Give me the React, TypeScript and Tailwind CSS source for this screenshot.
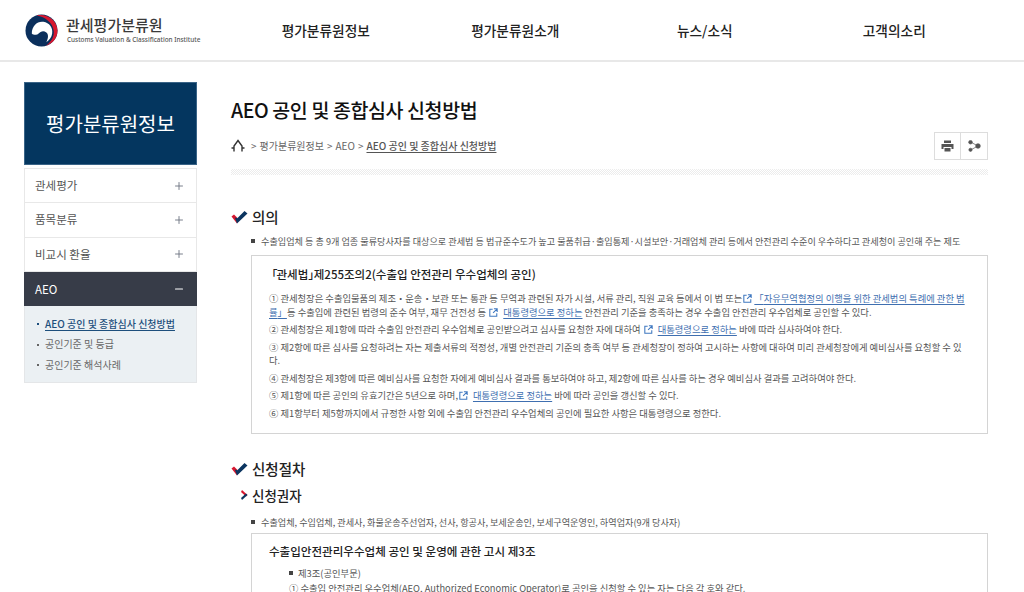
import { Plus, Minus } from "lucide-react";

const FONT = "font-['Noto_Sans_CJK_KR','Noto_Sans',sans-serif]";

const navItems = ["평가분류원정보", "평가분류원소개", "뉴스/소식", "고객의소리"];
const sideItems = ["관세평가", "품목분류", "비교시 환율"];

function Logo() {
  return (
    <svg width="33" height="33" viewBox="0 0 34 34" className="shrink-0">
      <circle cx="17" cy="17" r="16.500" fill="#0b2f5c" />
      <path d="M12 1.500 C22 -1 33 6 33.500 17 C33.500 25 28 31 21 33 C27 29 30.500 23 29.500 17 C28.500 9 21 3 12 1.500Z" fill="#d7172f" />
      <path d="M7 20 C7 12 13 7 19 8 C25 9 29 14 28 20 C27.500 24 25 27 22 29 C24 25 24.500 21 22 19 C19 16.500 16 18 14 20 C12 22 9 22 7 20Z" fill="#fff" />
    </svg>
  );
}

function Check() {
  return (
    <svg width="17" height="13" viewBox="0 0 17 13" className="shrink-0">
      <path d="M0.500 5.500 L3 3.500 L6.500 7 L6 12.500 Z" fill="#d7172f" />
      <path d="M6 12.500 L3.800 6.500 L6.300 7.200 L13.500 0 L16.500 2.500 Z" fill="#0b3560" />
    </svg>
  );
}

function ExtLink() {
  return (
    <svg width="9" height="9" viewBox="0 0 11 11" className="inline-block align-[-1px] mx-[1px]" fill="none" stroke="#3f78c0" strokeWidth="1.300">
      <path d="M4.500 1.500 H1 V10 H9.500 V6.500" />
      <path d="M6 1 H10 V5 M10 1 L5 6" />
    </svg>
  );
}

function LawLink({ children }: { children: React.ReactNode }) {
  return <a className="text-[#3f6fb0] underline underline-offset-2 ml-[4px]">{children}</a>;
}

function Bullet() {
  return <span className="w-[4px] h-[4px] shrink-0 bg-[#444]" />;
}

export default function App() {
  return (
    <div className={`${FONT} h-[592px] w-[1024px] overflow-hidden bg-white text-[#333]`}>
      {/* header */}
      <header className="h-[62px] border-b-2 border-[#e8e8e8] flex">
        <div className="w-[231px] pl-[25px] pt-[14px] flex gap-[8px]">
          <Logo />
          <div className="whitespace-nowrap mt-[1px]">
            <div className="text-[15px] leading-[19px] font-medium text-[#3a3a3a]">관세평가분류원</div>
            <div className="text-[6.400px] leading-[10px] mt-[1px] ml-[1px] font-medium text-[#555] font-['Noto_Sans',sans-serif]">Customs Valuation &amp; Classification Institute</div>
          </div>
        </div>
        <nav className="w-[758px] grid grid-cols-4">
          {navItems.map((n) => (
            <a key={n} className="flex items-center justify-center h-[60px] text-[13.700px] font-medium text-[#222]">{n}</a>
          ))}
        </nav>
      </header>

      <div className="flex pl-[24px] pt-[20px]">
        {/* sidebar */}
        <aside className="w-[173px] shrink-0 mr-[34px]">
          <div className="h-[83px] bg-[#04365f] flex items-center justify-center text-white text-[20px] border border-[#3a6487]">평가분류원정보</div>
          <div className="mt-[3px] border border-[#e8e8e8] border-b-0">
            {sideItems.map((s) => (
              <div key={s} className="h-[34.300px] flex items-center justify-between pl-[10px] pr-[11px] border-b border-[#e8e8e8] text-[11.500px] text-[#555]">
                {s}
                <Plus size={12} strokeWidth={1.800} className="text-[#6b7280]" />
              </div>
            ))}
          </div>
          <div className="h-[34px] bg-[#373c48] flex items-center justify-between pl-[11px] pr-[12px] pt-[1px] text-[11.500px] text-white">
            AEO
            <Minus size={12} strokeWidth={2.200} />
          </div>
          <ul className="h-[77px] bg-[#ebf0f3] border border-t-0 border-[#e4e6e8] pl-[12px] pt-[8px] text-[10px] leading-[20.500px] text-[#666]">
            <li className="flex items-center gap-[6px] text-[#1d4f7c] font-medium">
              <span className="w-[2px] h-[2px] bg-[#1d4f7c]" />
              <span className="underline underline-offset-2">AEO 공인 및 종합심사 신청방법</span>
            </li>
            <li className="flex items-center gap-[6px]">
              <span className="w-[2px] h-[2px] bg-[#666]" />공인기준 및 등급
            </li>
            <li className="flex items-center gap-[6px]">
              <span className="w-[2px] h-[2px] bg-[#666]" />공인기준 해석사례
            </li>
          </ul>
        </aside>

        {/* content */}
        <main className="w-[757px] shrink-0">
          <h1 className="mt-[14px] text-[19.500px] leading-[28px] font-medium text-[#111] tracking-[-0.4px]">AEO 공인 및 종합심사 신청방법</h1>
          <div className="flex justify-between items-start h-[28px] mt-[8px]">
            <div className="flex items-center gap-[3px] h-[26px] text-[10px] text-[#666] whitespace-nowrap">
              <svg width="14" height="13" viewBox="0 0 14 13" fill="none" stroke="#333" strokeWidth="1.400" className="mr-[3px]">
                <path d="M3 12.500 V7 L7 1.500 L11 7 V12.500 M0.500 9 H3 M11 9 H13.500" />
              </svg>
              <span>&gt;</span>
              <span>평가분류원정보</span>
              <span>&gt;</span>
              <span>AEO</span>
              <span>&gt;</span>
              <span className="font-medium text-[#555] underline underline-offset-2">AEO 공인 및 종합심사 신청방법</span>
            </div>
            <div className="flex">
              <button className="w-[27px] h-[28px] border border-[#ddd] flex items-center justify-center">
                <svg width="13" height="12" viewBox="0 0 13 12" fill="#555">
                  <path d="M3 0.500 H10 V3 H3Z M0.500 4 H12.500 V9 H10.500 V7 H2.500 V9 H0.500Z M3.500 8 H9.500 V11.500 H3.500Z" />
                </svg>
              </button>
              <button className="w-[27px] h-[28px] border border-l-0 border-[#ddd] flex items-center justify-center">
                <svg width="13" height="12" viewBox="0 0 13 12" fill="#555" stroke="#555" strokeWidth="0.700">
                  <circle cx="2.500" cy="2.200" r="1.800" />
                  <circle cx="2.500" cy="9.800" r="1.600" />
                  <circle cx="10" cy="6" r="2.300" />
                  <path d="M2.500 2 L10 6 L2.500 10" fill="none" />
                </svg>
              </button>
            </div>
          </div>
          <div className="mt-[9px] h-[6px] bg-[conic-gradient(#ececec_25%,#fff_0_50%,#ececec_0_75%,#fff_0)] bg-[length:2px_2px]" />

          <h2 className="mt-[31px] flex items-center gap-[4px] text-[14.500px] leading-[22px] font-medium text-[#222]">
            <Check />
            의의
          </h2>
          <p className="mt-[5px] ml-[20px] flex items-center gap-[6px] text-[9.150px] leading-[16px] text-[#555] whitespace-nowrap">
            <Bullet />
            수출입업체 등 총 9개 업종 물류당사자를 대상으로 관세법 등 법규준수도가 높고 물품취급·출입통제·시설보안·거래업체 관리 등에서 안전관리 수준이 우수하다고 관세청이 공인해 주는 제도
          </p>

          <section className="mt-[6px] ml-[20px] h-[179px] border border-[#d4d4d4] pl-[17px] pr-[19px] pt-[7px] text-[9.320px] leading-[13.500px] text-[#555]">
            <h3 className="text-[11.500px] leading-[22px] font-medium text-[#222] mb-[7px]">
              <span className="-ml-[3px] -mr-[1px]">「</span>관세법<span className="-mr-[6px]">」</span>제255조의2(수출입 안전관리 우수업체의 공인)
            </h3>
            <p className="mb-[4px]">
              ① 관세청장은 수출입물품의 제조・운송・보관 또는 통관 등 무역과 관련된 자가 시설, 서류 관리, 직원 교육 등에서 이 법 또는<ExtLink /><LawLink><span className="-ml-[3px]">「</span>자유무역협정의 이행을 위한 관세법의 특례에 관한 법률<span className="-mr-[2px]">」</span></LawLink> 등 수출입에 관련된 법령의 준수 여부, 재무 건전성 등 <ExtLink /><LawLink>대통령령으로 정하는</LawLink> 안전관리 기준을 충족하는 경우 수출입 안전관리 우수업체로 공인할 수 있다.
            </p>
            <p className="mb-[4px]">
              ② 관세청장은 제1항에 따라 수출입 안전관리 우수업체로 공인받으려고 심사를 요청한 자에 대하여 <ExtLink /><LawLink>대통령령으로 정하는</LawLink> 바에 따라 심사하여야 한다.
            </p>
            <p className="mb-[4px]">
              ③ 제2항에 따른 심사를 요청하려는 자는 제출서류의 적정성, 개별 안전관리 기준의 충족 여부 등 관세청장이 정하여 고시하는 사항에 대하여 미리 관세청장에게 예비심사를 요청할 수 있다.
            </p>
            <p className="mb-[4px]">
              ④ 관세청장은 제3항에 따른 예비심사를 요청한 자에게 예비심사 결과를 통보하여야 하고, 제2항에 따른 심사를 하는 경우 예비심사 결과를 고려하여야 한다.
            </p>
            <p className="mb-[4px]">
              ⑤ 제1항에 따른 공인의 유효기간은 5년으로 하며,<ExtLink /><LawLink>대통령령으로 정하는</LawLink> 바에 따라 공인을 갱신할 수 있다.
            </p>
            <p>⑥ 제1항부터 제5항까지에서 규정한 사항 외에 수출입 안전관리 우수업체의 공인에 필요한 사항은 대통령령으로 정한다.</p>
          </section>

          <h2 className="mt-[24px] flex items-center gap-[4px] text-[14.500px] leading-[22px] font-medium text-[#222]">
            <Check />
            신청절차
          </h2>
          <h3 className="mt-[5px] ml-[10px] flex items-center gap-[4px] text-[13.500px] leading-[20px] font-medium text-[#222]">
            <svg width="7" height="10" viewBox="0 0 7 10" className="shrink-0">
              <path d="M1 0 L6.500 5 L5 6.500 L0 2Z" fill="#d7172f" />
              <path d="M6.500 5 L1 10 L0 8 L5 3.500Z" fill="#0b3560" />
            </svg>
            신청권자
          </h3>
          <p className="mt-[9px] ml-[20px] flex items-center gap-[6px] text-[9.150px] leading-[16px] text-[#555] whitespace-nowrap">
            <Bullet />
            수출업체, 수입업체, 관세사, 화물운송주선업자, 선사, 항공사, 보세운송인, 보세구역운영인, 하역업자(9개 당사자)
          </p>
          <section className="mt-[3px] ml-[20px] border border-[#d4d4d4] pl-[17px] pr-[16px] pt-[6px] h-[120px] text-[9.320px] leading-[14px] text-[#555]">
            <h3 className="text-[11.550px] leading-[22px] font-medium text-[#222] mb-[4px]">수출입안전관리우수업체 공인 및 운영에 관한 고시 제3조</h3>
            <p className="ml-[20px] flex items-center gap-[5px]">
              <Bullet />
              제3조(공인부문)
            </p>
            <p className="ml-[20px] mt-[1px]">① 수출입 안전관리 우수업체(AEO, Authorized Economic Operator)로 공인을 신청할 수 있는 자는 다음 각 호와 같다.</p>
          </section>
        </main>
      </div>
    </div>
  );
}
